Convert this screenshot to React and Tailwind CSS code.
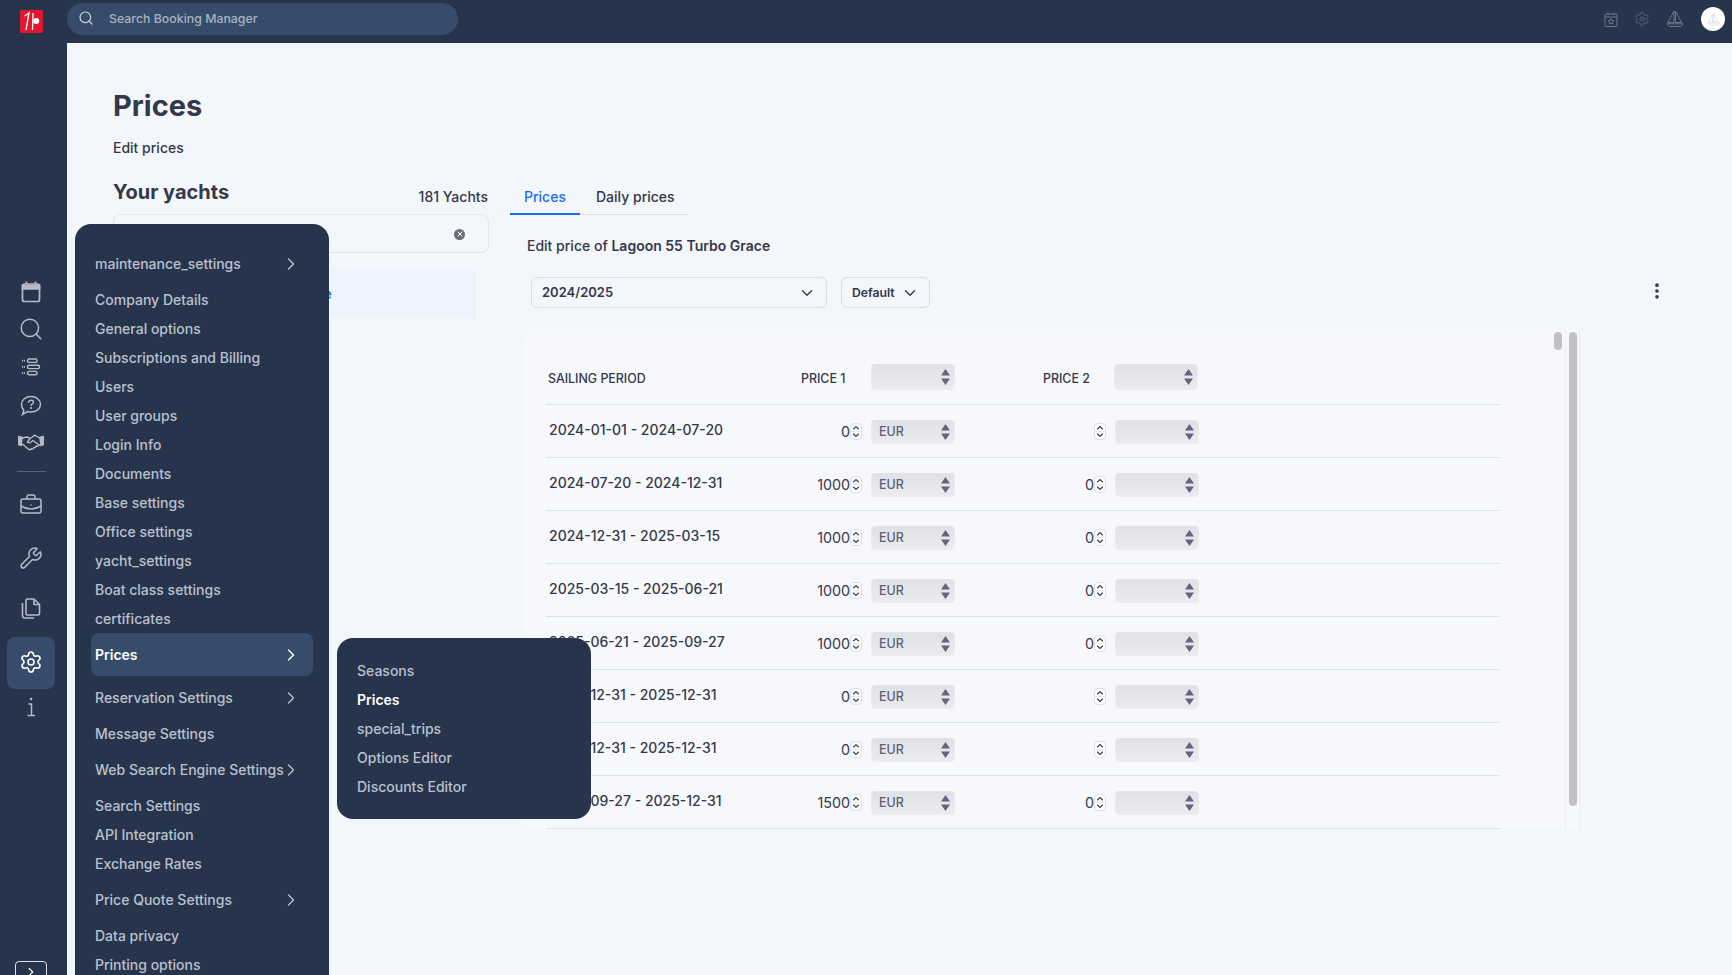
import React from 'react';
import { Search, ChevronRight, ChevronDown, BriefcaseBusiness, Wrench, Settings, EllipsisVertical, X } from 'lucide-react';

const rows = [
    { period: '2024-01-01 - 2024-07-20', p1: '0', p2: '' },
    { period: '2024-07-20 - 2024-12-31', p1: '1000', p2: '0' },
    { period: '2024-12-31 - 2025-03-15', p1: '1000', p2: '0' },
    { period: '2025-03-15 - 2025-06-21', p1: '1000', p2: '0' },
    { period: '2025-06-21 - 2025-09-27', p1: '1000', p2: '0' },
    { period: '2025-12-31 - 2025-12-31', p1: '0', p2: '' },
    { period: '2025-12-31 - 2025-12-31', p1: '0', p2: '' },
    { period: '2025-09-27 - 2025-12-31', p1: '1500', p2: '0' },
];

const menu = [
    { label: 'maintenance_settings', arrow: true },
    { label: 'Company Details' },
    { label: 'General options' },
    { label: 'Subscriptions and Billing' },
    { label: 'Users' },
    { label: 'User groups' },
    { label: 'Login Info' },
    { label: 'Documents' },
    { label: 'Base settings' },
    { label: 'Office settings' },
    { label: 'yacht_settings' },
    { label: 'Boat class settings' },
    { label: 'certificates' },
    { label: 'Prices', arrow: true, active: true },
    { label: 'Reservation Settings', arrow: true },
    { label: 'Message Settings' },
    { label: 'Web Search Engine Settings', arrow: true },
    { label: 'Search Settings' },
    { label: 'API Integration' },
    { label: 'Exchange Rates' },
    { label: 'Price Quote Settings', arrow: true },
    { label: 'Data privacy' },
    { label: 'Printing options' },
];

const submenu = ['Seasons', 'Prices', 'special_trips', 'Options Editor', 'Discounts Editor'];

const Logo = () => (
    <svg width="23" height="23" viewBox="0 0 23 23">
        <rect width="23" height="23" rx="1.5" fill="#e2162e" />
        <path d="M4.5 6 L9 3 L6 20" stroke="#fff" strokeWidth="1.4" fill="none" />
        <path d="M13 3 L12.5 20" stroke="#fff" strokeWidth="1.3" fill="none" />
        <circle cx="16.2" cy="11" r="3" fill="#fff" />
    </svg>
);

const CalendarIcon = () => (
    <svg width="20" height="22" viewBox="0 0 20 22" fill="none" stroke="currentColor" strokeWidth="1.7">
        <rect x="1.5" y="3" width="17" height="17.5" rx="2" />
        <path d="M1.5 4.5 h17 v3.5 h-17 z" fill="currentColor" />
        <path d="M5.5 0.5 v3 M14.5 0.5 v3" />
    </svg>
);

const ListIcon = () => (
    <svg width="20" height="18" viewBox="0 0 20 18" fill="none" stroke="currentColor" strokeWidth="1.4">
        <rect x="6.5" y="1" width="9.500" height="3.400" rx="1.500" />
        <rect x="6.500" y="7.200" width="12" height="3.400" rx="1.500" />
        <rect x="6.500" y="13.400" width="9.500" height="3.400" rx="1.500" />
        <path d="M1 2.700 h3 M1 8.900 h3 M1 15.100 h3" strokeWidth="1.800" strokeDasharray="1.200 .8" />
    </svg>
);

const HelpIcon = () => (
    <svg width="22" height="21" viewBox="0 0 22 21" fill="none" stroke="currentColor" strokeWidth="1.5" strokeLinecap="round">
        <path d="M11 1.5 c5.2 0 9.5 3.4 9.5 7.8 s-4.3 7.8 -9.5 7.8 c-1.3 0 -2.5 -.2 -3.6 -.6 L2.5 19.5 l1.3 -4.2 C2.3 13.900 1.500 11.700 1.500 9.300 C1.500 4.900 5.800 1.500 11 1.500 z" />
        <path d="M8.600 7.200 c.3 -1.300 1.300 -2 2.500 -2 1.400 0 2.400 .9 2.400 2 0 1.800 -2.400 1.800 -2.400 3.400" />
        <circle cx="11.100" cy="13.100" r=".4" fill="currentColor" />
    </svg>
);

const HandshakeIcon = () => (
    <svg width="26" height="17" viewBox="0 0 26 17" fill="none" stroke="currentColor" strokeWidth="1.400" strokeLinejoin="round" strokeLinecap="round">
        <path d="M.7 2.500 L4.200 3.500 L3 11.500 L.7 10.500 z" fill="currentColor" />
        <path d="M25.300 2.500 L21.800 3.500 L23 11.500 L25.300 10.500 z" fill="currentColor" />
        <path d="M4.200 4 L9 3 L11.500 3.800" />
        <path d="M21.800 4 L16.500 1.200 L11.500 5 L9.500 8 L11.800 8.800 L15 6.500 L21.800 11.500" />
        <path d="M3.200 10.500 L5 10.500 L10.500 15.300 C11.500 16.200 13 15.800 13.200 14.800" />
        <path d="M13.200 14.800 C14.500 15.500 15.800 14.800 15.800 13.500 C17 14 18.300 13.200 18 12 C19.300 12.500 20.500 12 21 11" />
    </svg>
);

const CopyIcon = () => (
    <svg width="20" height="21" viewBox="0 0 20 21" fill="none" stroke="currentColor" strokeWidth="1.6" strokeLinejoin="round">
        <path d="M6.500 1 h6.500 l5.500 5.500 v9 a1.500 1.500 0 0 1 -1.500 1.500 h-10.500 a1.500 1.500 0 0 1 -1.500 -1.500 v-13 a1.500 1.500 0 0 1 1.500 -1.500 z" />
        <path d="M13 1 v5.500 h5.500" />
        <path d="M1.500 5 v12.500 a2.500 2.500 0 0 0 2.500 2.500 h9" />
    </svg>
);

const InfoIcon = () => (
    <svg width="10" height="20" viewBox="0 0 10 20" fill="none" stroke="currentColor" strokeWidth="1.5">
        <circle cx="5" cy="2" r="1.300" fill="currentColor" stroke="none" />
        <path d="M2.500 7 h3 v11.500 M1.500 18.500 h7.500" />
    </svg>
);

const CalendarStar = () => (
    <svg width="14" height="15" viewBox="0 0 14 15" fill="none" stroke="currentColor" strokeWidth="1">
        <rect x="1" y="2" width="12" height="12.500" rx="1" />
        <path d="M1 5 h12 M4 .5 v2.500 M10 .5 v2.500" />
        <path d="M7 6.500 l.9 1.900 2 .2 -1.500 1.400 .4 2 -1.800 -1 -1.800 1 .4 -2 -1.500 -1.400 2 -.2 z" />
    </svg>
);

const BoatIcon = ({ size = 18 }) => (
    <svg width={size} height={size} viewBox="0 0 18 18" fill="none" stroke="currentColor" strokeWidth="1" strokeLinejoin="round">
        <path d="M8 1 L2 12.500 H8 z" />
        <path d="M9.500 1 L15.500 12.500 H9.500 z" />
        <path d="M.8 13.800 H17.200 L15 16.500 H3.500 z" />
    </svg>
);

const Stepper = () => (
    <svg width="12" height="17" viewBox="0 0 12 17" className="shrink-0">
        <rect x=".5" y=".5" width="11" height="16" rx="3.500" fill="#fff" stroke="#dcdee3" />
        <path d="M.5 8.500 h11" stroke="#e5e7eb" />
        <path d="M3.200 6.200 L6 3.500 L8.800 6.200 M3.200 10.800 L6 13.500 L8.800 10.800" fill="none" stroke="#3c3f4c" strokeWidth="1.200" />
    </svg>
);

const NativeSelect = ({ value, className = '' }) => (
    <div className={`flex w-[84px] shrink-0 items-center justify-between rounded-[4px] bg-linear-to-b from-[#e0e1e4] to-[#ebecef] pl-[8px] pr-[5px] shadow-[inset_1px_0_2px_-1px_#f7f8fb,inset_-1px_0_2px_-1px_#f7f8fb] ${className}`}>
        <span className="mt-[2px] text-[12.4px] font-medium text-[#5f5e79]">{value}</span>
        <svg width="9" height="16" viewBox="0 0 9 16" fill="#65637e">
            <path d="M4.500 0 L9 6.500 H0 z M4.500 16 L9 9.500 H0 z" />
        </svg>
    </div>
);

const NavIcon = ({ className = 'h-[37px]', children }) => (
    <div className={`flex w-full items-center justify-center text-[#b6bac6] ${className}`}>{children}</div>
);

export default function App() {
    return (
        <div className="relative flex h-screen flex-col overflow-hidden bg-[#f3f6fa] font-[Inter,sans-serif] text-[#353849]">
            <header className="flex h-[43px] shrink-0 items-center bg-[#26354c]">
                <div className="-mt-[1px] flex w-[67px] justify-center pr-[4px]">
                    <Logo />
                </div>
                <div className="-mt-[5px] flex h-[32px] w-[391px] items-center rounded-full bg-[#374c6b] pl-[11px] text-[#c2c7d2]">
                    <Search size={16} strokeWidth={1.8} className="-mt-[2px] text-[#d5d8e0]" />
                    <span className="ml-[15px] mt-[1px] text-[12.35px] font-medium text-[#a9b1c0]">Search Booking Manager</span>
                </div>
                <div className="-mt-[5px] ml-auto flex items-center pr-[7px] text-[#6b7688]">
                    <CalendarStar />
                    <Settings size={16} strokeWidth={1} className="ml-[16px]" />
                    <span className="ml-[16px]"><BoatIcon /></span>
                    <div className="ml-[17px] flex h-[24px] w-[24px] items-center justify-center rounded-full bg-white text-[#d8dade]">
                        <BoatIcon size={13} />
                    </div>
                </div>
            </header>

            <div className="flex min-h-0 flex-1">
                <nav className="relative flex w-[67px] shrink-0 flex-col items-center bg-[#26354c] pr-[5px] pt-[230px]">
                    <NavIcon><CalendarIcon /></NavIcon>
                    <NavIcon><Search size={26} strokeWidth={1.4} /></NavIcon>
                    <NavIcon className="h-[39px]"><ListIcon /></NavIcon>
                    <NavIcon className="h-[38px]"><HelpIcon /></NavIcon>
                    <NavIcon><HandshakeIcon /></NavIcon>
                    <div className="mx-auto mt-[10px] h-px w-[29px] bg-[#55627a]" />
                    <NavIcon className="mt-[14px] h-[37px]"><BriefcaseBusiness size={24} strokeWidth={1.5} /></NavIcon>
                    <NavIcon className="mt-[16px] h-[37px]"><Wrench size={24} strokeWidth={1.5} /></NavIcon>
                    <NavIcon className="mt-[14px] h-[37px]"><CopyIcon /></NavIcon>
                    <div className="mt-[10px] flex h-[52px] w-[48px] shrink-0 items-center justify-center rounded-lg bg-[#374c6b] pb-[2px] text-white">
                        <Settings size={24} strokeWidth={1.6} />
                    </div>
                    <NavIcon className="h-[36px]"><InfoIcon /></NavIcon>
                    <div className="absolute left-[15px] top-[918px] flex h-[24px] w-[32px] items-start justify-center rounded-[4px] border border-[#dfe2e8] pt-[3px] text-white">
                        <ChevronRight size={14} />
                    </div>
                </nav>

                <main className="min-w-0 flex-1 pl-[46px] pt-[44px]">
                    <h1 className="text-[29px] font-bold leading-[38px]">Prices</h1>
                    <p className="mt-[13px] text-sm font-medium leading-[20px]">Edit prices</p>

                    <div className="mt-[20px] flex gap-[21px]">
                        <section className="w-[376px] shrink-0">
                            <div className="flex h-[36px] justify-between pr-[1px]">
                                <h2 className="text-xl font-bold leading-[28px]">Your yachts</h2>
                                <span className="mt-[9px] text-sm font-medium leading-[20px]">181 Yachts</span>
                            </div>
                            <div className="flex h-[39px] items-center justify-end rounded-lg border border-[#e0e4ea] border-t-[#e6e9ee] pr-[23px] pt-[1px]">
                                <span className="flex h-[11px] w-[11px] items-center justify-center rounded-full bg-[#6c6f78] text-white">
                                    <X size={8} strokeWidth={3} />
                                </span>
                            </div>
                            <div className="mt-[17px] flex h-[48px] w-[362px] items-center border-r border-[#e8ebf0] bg-[#eef4fe] pl-[60px] text-sm font-semibold text-[#1a6ef5]">
                                Lagoon 55 Turbo Grace
                            </div>
                        </section>

                        <section className="min-w-0 flex-1">
                            <div className="flex h-[37px] w-[179px] items-start border-b border-[#dfe3ea]">
                                <div className="-mb-px flex h-[37px] w-[70px] items-center justify-center border-b-2 border-[#1a6ef5] pt-[3px] text-sm font-medium text-[#1a6ef5]">Prices</div>
                                <div className="flex h-[37px] items-center pl-[16px] pt-[1px] text-sm font-medium">Daily prices</div>
                            </div>
                            <p className="ml-[17px] mt-[21px] text-sm font-medium leading-[20px]">
                                Edit price of <b className="font-semibold">Lagoon 55 Turbo Grace</b>
                            </p>
                            <div className="relative ml-[21px] mt-[21px] flex h-[31px] gap-[14px]">
                                <div className="flex w-[296px] items-center justify-between rounded-md border border-[#dadee5] pl-[10px] pr-[10px] text-[13px] font-semibold">
                                    2024/2025
                                    <ChevronDown size={18} strokeWidth={1.8} />
                                </div>
                                <div className="flex w-[89px] items-center justify-between rounded-md border border-[#dadee5] pl-[10px] pr-[10px] pt-[1px] text-[12.2px] font-semibold">
                                    Default
                                    <ChevronDown size={18} strokeWidth={1.8} className="-mt-[1px]" />
                                </div>
                                <EllipsisVertical size={20} strokeWidth={2.4} className="absolute left-[1116px] top-[4px]" />
                            </div>

                            <div className="ml-[14px] mt-[21px] flex h-[500px] w-[1056px]">
                                <div className="relative w-[1041px] overflow-hidden rounded-tl-xl bg-[#f7f8fb] pl-[22px]">
                                    <div className="flex h-[76px] w-[954px] items-center border-b border-[#dde0e6] pt-[21px] text-[12.4px] font-medium">
                                        <span className="mt-[4px] w-[255px] shrink-0 pl-[2px]">SAILING PERIOD</span>
                                        <span className="mt-[4px] w-[70px] shrink-0">PRICE 1</span>
                                        <NativeSelect className="h-[26px]" />
                                        <span className="ml-[88px] mt-[4px] w-[71px] shrink-0">PRICE 2</span>
                                        <NativeSelect className="h-[26px]" />
                                    </div>
                                    {rows.map((row, idx) => (
                                        <div key={idx} className="flex h-[53px] w-[954px] items-center border-b border-[#dde0e6]">
                                            <span className="-mt-[2px] w-[225px] shrink-0 pl-[3px] text-sm font-medium">{row.period}</span>
                                            <div className="mt-[1px] flex w-[91px] shrink-0 items-center justify-end text-[14.3px]">
                                                {row.p1}
                                                <Stepper />
                                            </div>
                                            <NativeSelect value="EUR" className="ml-[9px] mt-[1px] h-[24px]" />
                                            <div className="mt-[1px] flex w-[151px] shrink-0 items-center justify-end text-[14.3px]">
                                                {row.p2}
                                                <Stepper />
                                            </div>
                                            <NativeSelect className="ml-[9px] mt-[1px] h-[24px]" />
                                        </div>
                                    ))}
                                    <div className="absolute right-[3px] top-[3px] h-[18px] w-[8px] rounded-full bg-[#c1c1c1]" />
                                </div>
                                <div className="w-[15px] shrink-0 border-x border-[#eceef2] bg-[#f7f8fb] px-[3px] pt-[3px]">
                                    <div className="h-[474px] w-[8px] rounded-full bg-[#c1c1c1]" />
                                </div>
                            </div>
                        </section>
                    </div>
                </main>
            </div>

            <div className="absolute left-[75px] top-[224px] w-[254px] rounded-t-2xl bg-[#26354c] pl-[16px] pr-[16px] pt-[18px] text-sm font-medium text-[#bcc0cc]">
                {menu.map((item) => (
                    <div
                        key={item.label}
                        className={`flex items-center justify-between rounded-lg pl-[4px] pr-[13px] ${item.arrow ? 'h-[43px]' : 'h-[29px]'} ${item.active ? 'bg-[#374c6b] font-semibold text-white' : ''}`}
                    >
                        <span className="whitespace-nowrap">{item.label}</span>
                        {item.arrow && <ChevronRight size={20} strokeWidth={1.6} className="-ml-[6px] -mr-[1px] shrink-0" />}
                    </div>
                ))}
            </div>

            <div className="absolute left-[337px] top-[638px] w-[254px] rounded-2xl bg-[#26354c] px-[20px] py-[18px] text-sm font-medium text-[#bcc0cc]">
                {submenu.map((item) => (
                    <div key={item} className={`flex h-[29px] items-center ${item === 'Prices' ? 'font-semibold text-white' : ''}`}>
                        {item}
                    </div>
                ))}
            </div>
        </div>
    );
}
